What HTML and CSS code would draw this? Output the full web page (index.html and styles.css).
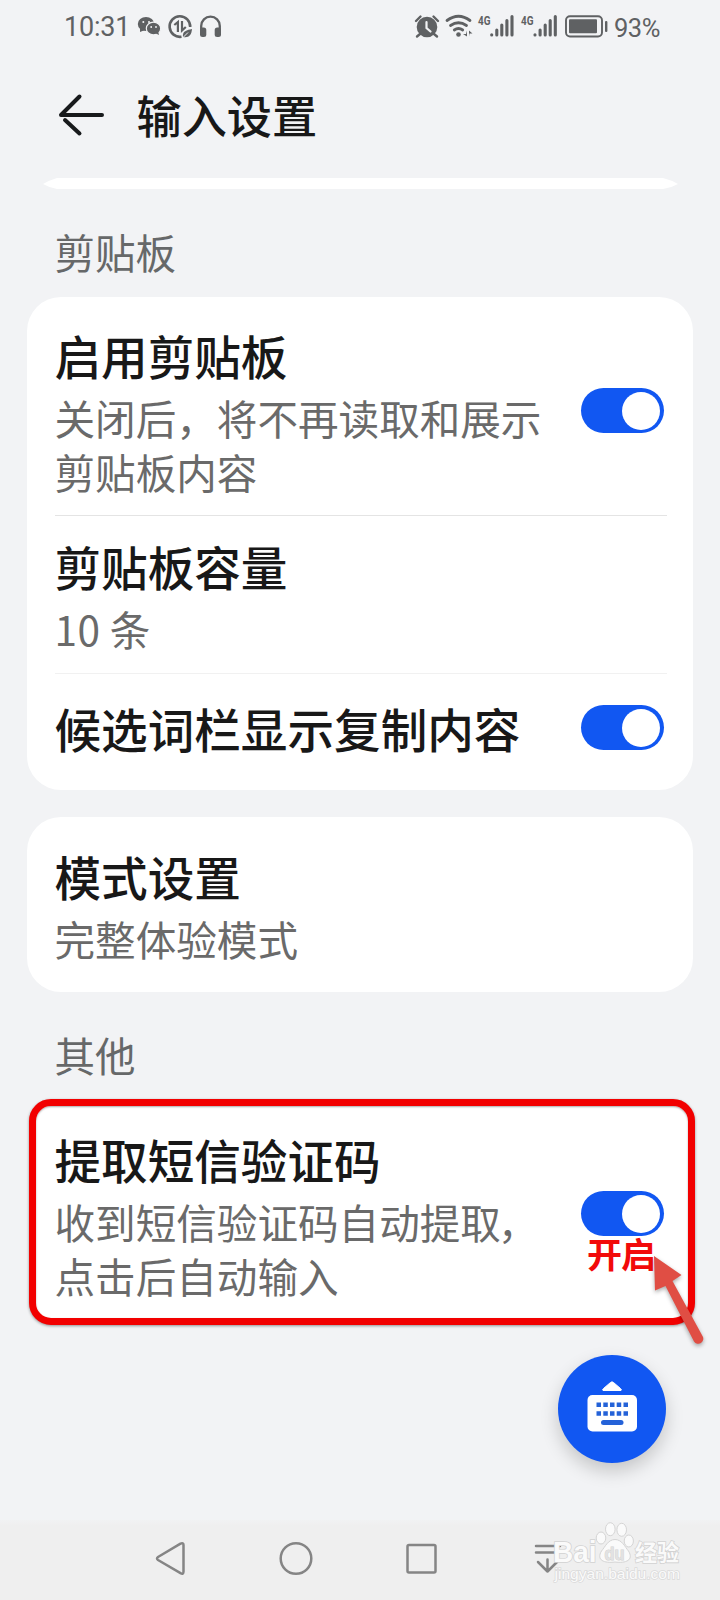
FILE: index.html
```html
<!DOCTYPE html>
<html lang="zh-CN">
<head>
<meta charset="utf-8">
<title>输入设置</title>
<link rel="stylesheet" href="styles.css">
</head>
<body>
<div class="screen">
  <div class="status">
    <div class="status-left">
      <span class="clock">10:31</span>
      <svg class="status-icons-left" width="90" height="60" viewBox="134 0 90 60" fill="#5f6163">
        <ellipse cx="146" cy="24" rx="8.2" ry="7"/>
        <path d="M140 28l0 4 5-2z"/>
        <ellipse cx="153.500" cy="28.500" rx="7.200" ry="6.400" stroke="#f2f3f5" stroke-width="1.200"/>
        <path d="M155 33l4 2-1-4z"/>
        <g fill="#f2f3f5"><circle cx="143.300" cy="22" r="1"/><circle cx="149" cy="22" r="1"/><circle cx="151.200" cy="27" r=".9"/><circle cx="156" cy="27" r=".9"/></g>
        <path d="M190.200 27A10.300 10.300 0 1 0 181.500 36.700" fill="none" stroke="#5f6163" stroke-width="2.600"/>
        <path d="M174.300 25l3.600-3v10M182 21v9.500l3.800-3.500" fill="none" stroke="#5f6163" stroke-width="2.200"/>
        <path d="M183 37c-1-6 4-7 9-8-.5 6-3 9-9 8z"/>
        <path d="M181.500 39l6.500-6.500" stroke="#f2f3f5" stroke-width="1"/>
        <path d="M201.200 31v-5a9.300 9.300 0 0 1 18.600 0V31" fill="none" stroke="#5f6163" stroke-width="2.300"/>
        <rect x="200" y="27.500" width="6.300" height="9.500" rx="2.500"/><rect x="214.700" y="27.500" width="6.300" height="9.500" rx="2.500"/>
      </svg>
    </div>
    <div class="status-right">
      <svg width="202" height="60" viewBox="412 0 202 60" fill="#5f6163">
        <circle cx="427" cy="27" r="10.300"/>
        <path d="M416 21l4.500-4.500M438 21l-4.500-4.500M420 34l-3 2.500M434 34l3 2.500" stroke="#5f6163" stroke-width="2.400" stroke-linecap="round"/>
        <path d="M426.500 22v6l4 3.500" fill="none" stroke="#f2f3f5" stroke-width="2.200" stroke-linecap="round"/>
        <g fill="none" stroke="#5f6163" stroke-width="2.800" stroke-linecap="round">
          <path d="M447 20.500q11.500-8.500 23 0M450.500 25.500q8-5.500 16 0M454.300 30q4.200-3 8.400 0"/>
        </g>
        <circle cx="458.500" cy="34.500" r="2.300"/>
        <path d="M467 30.500v6l-4-2.500h3M469 36.500v-6l3.500 3h-3z"/>
        <text class="net" x="478" y="24.500" textLength="12.500" lengthAdjust="spacingAndGlyphs">4G</text>
        <text class="net" x="521" y="24.500" textLength="12.500" lengthAdjust="spacingAndGlyphs">4G</text>
        <g stroke="#5f6163" stroke-width="3.100" stroke-linecap="round">
          <path d="M491.700 34.700v.3M496.800 30v5M501.800 25v10M506.900 20.500V35M512 16.500V35"/>
          <path d="M535 34.700v.3M540.100 30v5M545.200 25v10M550.200 20.500V35M555.300 16.500V35"/>
        </g>
        <rect x="566" y="16.200" width="36" height="20.300" rx="4" fill="none" stroke="#5f6163" stroke-width="1.900"/>
        <rect x="569" y="19.200" width="28" height="14" rx="1"/>
        <rect x="605" y="21" width="2.400" height="11" rx="1"/>
      </svg>
      <span class="percent">93%</span>
    </div>
  </div>

  <header class="header">
    <svg width="52" height="48" viewBox="56 91 52 48" fill="none" stroke="#181a1c" stroke-width="4" stroke-linecap="round" stroke-linejoin="round"><path d="M102 115H61L79.500 96.500M65 120l14.500 13.500"/></svg>
    <h1 class="header-title">输入设置</h1>
  </header>
  <svg class="card-edge" width="640" height="12" viewBox="0 0 640 12"><path d="M2 6Q9 2 16 0H622Q630 2 637 6Q630 10 622 11H16Q9 10 2 6z" fill="#fff"/></svg>

  <h2 class="section section-clip">剪贴板</h2>
  <div class="card">
    <div class="row row-first">
      <div class="copy"><div class="title">启用剪贴板</div><div class="desc">关闭后，将不再读取和展示<br>剪贴板内容</div></div>
      <span class="toggle"></span>
    </div>
    <div class="row row-size">
      <div class="copy"><div class="title">剪贴板容量</div><div class="desc"><span class="count">10</span> 条</div></div>
    </div>
    <div class="row row-candidate">
      <div class="copy"><div class="title">候选词栏显示复制内容</div></div>
      <span class="toggle"></span>
    </div>
  </div>
  <div class="card card-mode">
    <div class="row row-mode">
      <div class="copy"><div class="title">模式设置</div><div class="desc">完整体验模式</div></div>
    </div>
  </div>
  <h2 class="section section-other">其他</h2>
  <div class="card-marked">
    <div class="copy"><div class="title">提取短信验证码</div><div class="desc">收到短信验证码自动提取<span class="comma">，</span><br>点击后自动输入</div></div>
    <div class="toggle-col"><span class="toggle"></span><b class="note">开启</b></div>
    <svg class="pointer" width="60" height="96" viewBox="650 1252 60 96"><path d="M654 1256L681.500 1275 672.500 1281 702.500 1336A5 5 0 0 1 694 1341.500L665.500 1286 655 1290.500z" fill="#e04e44"/></svg>
  </div>
  <div class="fab-row">
    <div class="fab">
      <svg width="50" height="52" viewBox="0 0 50 52"><path d="M16 9.500Q15 8.500 16.500 7.500L23.500 1.500Q25 .2 26.500 1.500L33.500 7.500Q35 8.500 34 9.500z" fill="#fff" stroke="#fff"/><rect x=".5" y="14" width="49.500" height="36.500" rx="5" fill="#fff"/><g fill="#2462d8"><path d="M9.500 21.500h4.500v4.500h-4.500zM16.300 21.500h4.500v4.500h-4.500zM23 21.500h4.500v4.500h-4.500zM29.700 21.500h4.500v4.500h-4.500zM36.500 21.500h4.500v4.500h-4.500zM9.500 30.300h4.500v4.500h-4.500zM16.300 30.300h4.500v4.500h-4.500zM23 30.300h4.500v4.500h-4.500zM29.700 30.300h4.500v4.500h-4.500zM36.500 30.300h4.500v4.500h-4.500z"/><rect x="14" y="39" width="22.500" height="5" rx="2.500"/></g></svg>
    </div>
  </div>

  <nav class="nav">
    <svg width="720" height="80" viewBox="0 1520 720 80" fill="none" stroke="#858585" stroke-width="2.500" stroke-linecap="round" stroke-linejoin="round">
      <path d="M158 1557L180.500 1543.600Q183.500 1542.500 183.500 1545V1571.500Q183.500 1574.800 180.500 1573.200L158 1560Q156 1558.500 158 1557z"/>
      <circle cx="296" cy="1558.500" r="15.300"/>
      <rect x="407.500" y="1545" width="28" height="27.500" rx="1.500"/>
      <path d="M536 1546H560M536 1552.500H556M547.500 1559.500V1571.500M538 1562l9.500 9.500L557 1562"/>
    </svg>
    <div class="watermark">
      <svg width="176" height="72" viewBox="550 1518 176 72">
        <g fill="#fafafa" stroke="#d4d4d4" stroke-width="1">
          <ellipse cx="601" cy="1538" rx="4.800" ry="6"/><ellipse cx="610.300" cy="1529.200" rx="4.800" ry="6.500"/><ellipse cx="621.700" cy="1529.800" rx="4.800" ry="6.500"/><ellipse cx="628.800" cy="1541" rx="4.600" ry="6"/>
          <path d="M615 1539.500C608 1539.500 605 1547 601.500 1551C596 1560 604 1563.500 615 1562C626 1563.500 634 1560 628.500 1551C625 1547 622 1539.500 615 1539.500z"/>
        </g>
        <text class="wm-latin" x="553" y="1561.500" textLength="43.500" lengthAdjust="spacingAndGlyphs">Bai</text>
        <text class="wm-du" x="604.500" y="1560" textLength="20" lengthAdjust="spacingAndGlyphs">du</text>
        <text class="wm-cjk" x="635" y="1560.500" textLength="44" lengthAdjust="spacingAndGlyphs">经验</text>
        <text class="wm-url" x="554.500" y="1578.500" textLength="125.500" lengthAdjust="spacingAndGlyphs">jingyan.baidu.com</text>
      </svg>
    </div>
  </nav>
</div>
</body>
</html>
```
FILE: styles.css
```css
* { box-sizing: border-box; }
body { margin: 0; background: #f2f3f5; font-family: "Noto Sans CJK SC", sans-serif; color: #181818; }
svg { display: block; flex: none; }
.screen { width: 720px; height: 1600px; overflow: hidden; display: flex; flex-direction: column; background: #f2f3f5; }
.screen > * { flex: none; }

.status { height: 60px; display: flex; justify-content: space-between; padding: 0 58px 0 64px; font-family: Roboto, sans-serif; color: #5f6163; }
.status-left, .status-right { display: flex; }
.clock { width: 70px; font-size: 27px; line-height: 55px; letter-spacing: -0.2px; }
.percent { width: 48px; font-size: 25.5px; line-height: 56px; letter-spacing: -0.5px; white-space: nowrap; }
.net { font: bold 12px Roboto, sans-serif; }

.header { height: 119px; padding-top: 31px; padding-left: 56px; display: flex; align-items: flex-start; }
.header-title { margin: -5px 0 0 28.5px; font-size: 45.2px; line-height: 58px; font-weight: 500; }
.card-edge { margin: -1px 0 0 41px; }

.section { margin: 0; padding-left: 54.5px; font-size: 40.5px; line-height: 54px; font-weight: 400; color: #666869; }
.section-clip { padding-top: 35px; height: 107px; }
.section-other { padding-top: 36px; height: 107px; }

.card { width: 666.5px; margin-left: 26.5px; padding: 0 26px 0 28px; background: #fff; border-radius: 34px; }
.card-mode { margin-top: 27px; }
.row { display: flex; justify-content: space-between; }
.row-first { height: 219px; padding-top: 29px; border-bottom: 1px solid #e4e4e4; }
.row-size { height: 158px; padding-top: 21px; border-bottom: 1px solid #f1f1f1; }
.row-candidate { height: 116px; padding-top: 25px; }
.row-mode { height: 175px; padding-top: 30px; }
.title { font-size: 46.6px; line-height: 58px; font-weight: 500; white-space: nowrap; }
.desc { margin-top: 7px; font-size: 40.6px; line-height: 53.5px; color: #6a6a6a; white-space: nowrap; font-weight: 400; }
.count { letter-spacing: 0.6px; }
.comma { margin-left: -3px; }

.toggle { display: flex; flex: none; justify-content: flex-end; align-items: center; width: 83px; height: 45px; padding-right: 4px; margin-right: 3px; border-radius: 23px; background: #1157f2; }
.toggle::after { content: ""; width: 38px; height: 38px; border-radius: 50%; background: #fff; }
.row-first .toggle { margin-top: 62px; }
.row-candidate .toggle { margin-top: 6px; }

.card-marked { position: relative; width: 666px; height: 226px; margin-left: 29px; padding: 24px 21px 0 18.5px; display: flex; justify-content: space-between; background: #fff; border: 7px solid #f20000; border-radius: 22px; box-shadow: 0 1px 3px #0006, inset 0 1px 2px #0005; }
.toggle-col { padding-top: 61px; }
.note { display: block; margin-top: -6px; padding-left: 6px; font-size: 35px; line-height: 46px; letter-spacing: -1px; color: #f20a0a; font-weight: 700; }
.pointer { position: absolute; left: 614px; top: 146px; filter: drop-shadow(0 2px 2px #0005); }

.fab-row { display: flex; justify-content: flex-end; padding: 30px 54px 0 0; height: 195px; }
.fab { width: 108px; height: 108px; display: flex; justify-content: center; align-items: center; padding-bottom: 4px; border-radius: 50%; background: #1157f2; box-shadow: 0 8px 18px #00000030; }

.nav { position: relative; height: 80px; background: linear-gradient(#f1f2f3, #efefef 6px); }
.watermark { position: absolute; left: 550px; top: -2px; }
.wm-latin, .wm-cjk, .wm-url, .wm-du { fill: #fafafa; stroke: #d2d2d2; stroke-width: 1.6px; paint-order: stroke; }
.wm-latin { font: bold 29px "Liberation Sans", sans-serif; }
.wm-du { font: bold 18px "Liberation Sans", sans-serif; fill: #e2e2e2; stroke-width: 1px; }
.wm-cjk { font: bold 23px "Noto Sans CJK SC", sans-serif; }
.wm-url { font: 14.5px "Liberation Sans", sans-serif; stroke: #dadada; stroke-width: 1.4px; }
```
